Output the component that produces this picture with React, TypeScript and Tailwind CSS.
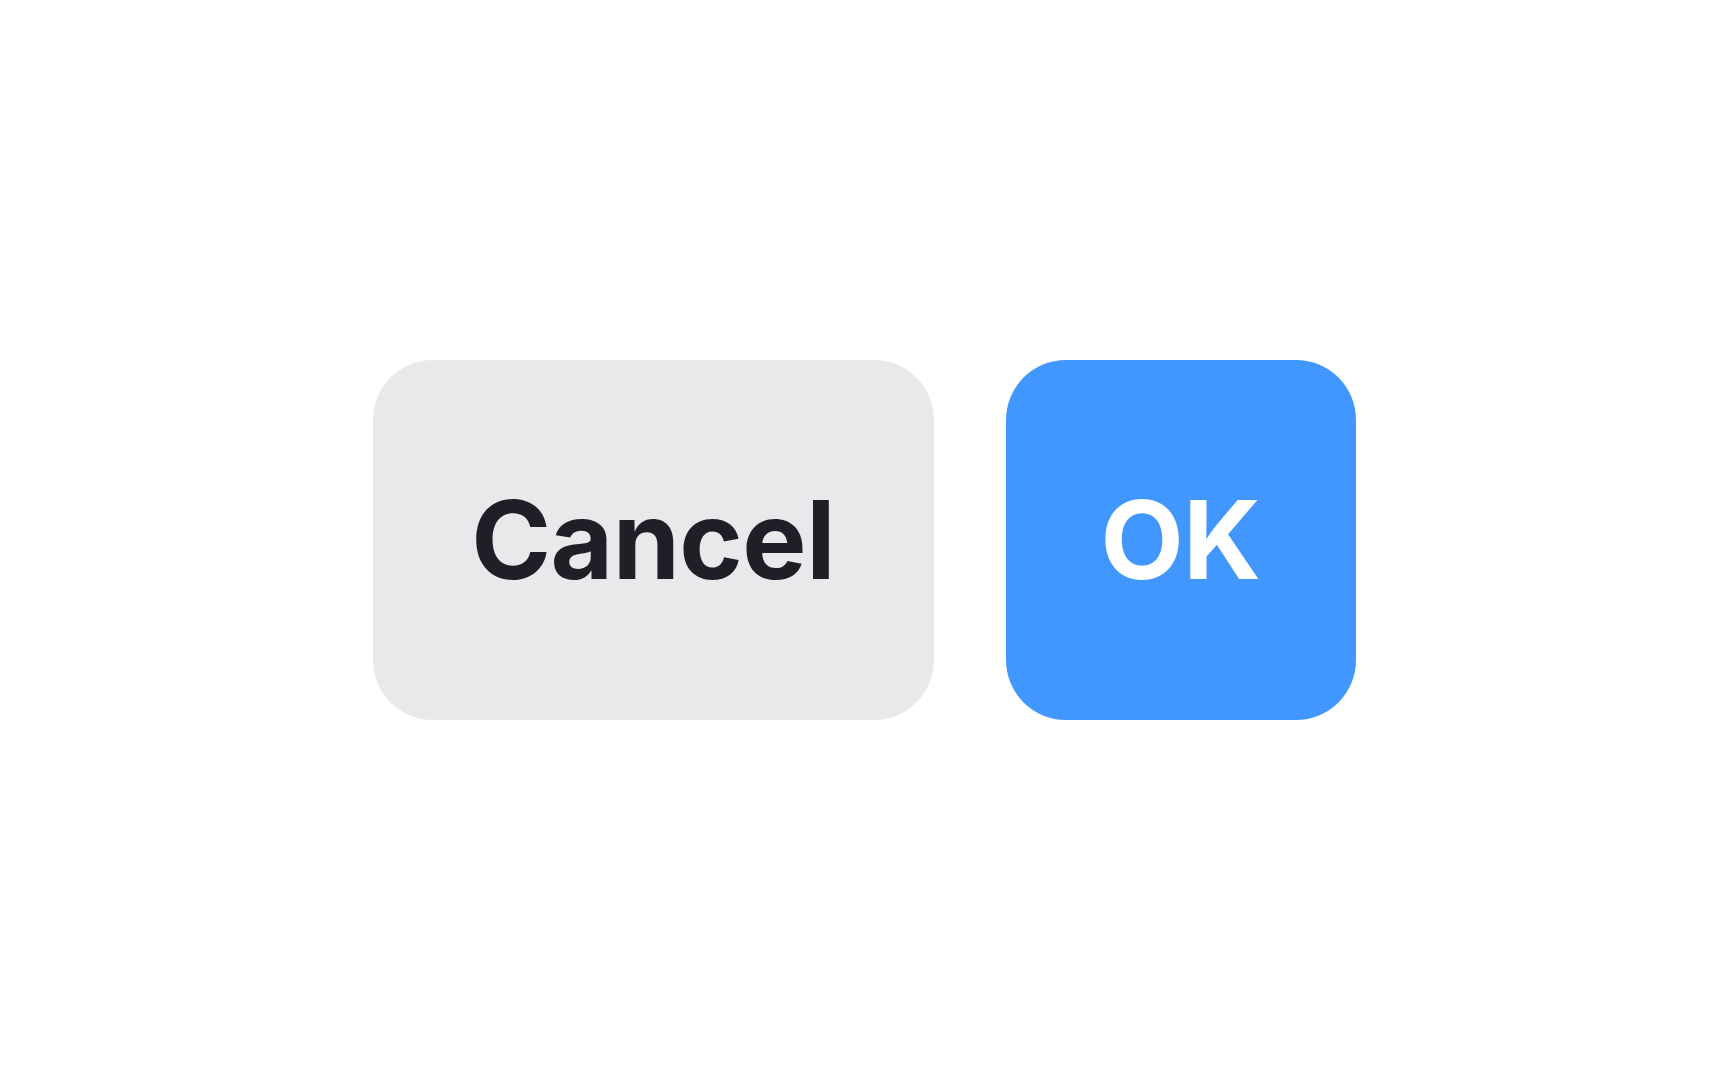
export default function App() {
  return (
    <div className="min-h-screen w-full bg-white flex items-center justify-center gap-[72px] font-['Inter',sans-serif]">
      <button className="h-[360px] w-[561px] flex items-center justify-center rounded-[60px] bg-[#e9e9eb] text-[#1f2027] text-[108px] font-bold tracking-[-0.005em] leading-none">
        Cancel
      </button>
      <button className="h-[360px] w-[350px] flex items-center justify-center rounded-[60px] bg-[#4197fd] text-white text-[108px] font-bold tracking-[-0.005em] leading-none">
        OK
      </button>
    </div>
  );
}
